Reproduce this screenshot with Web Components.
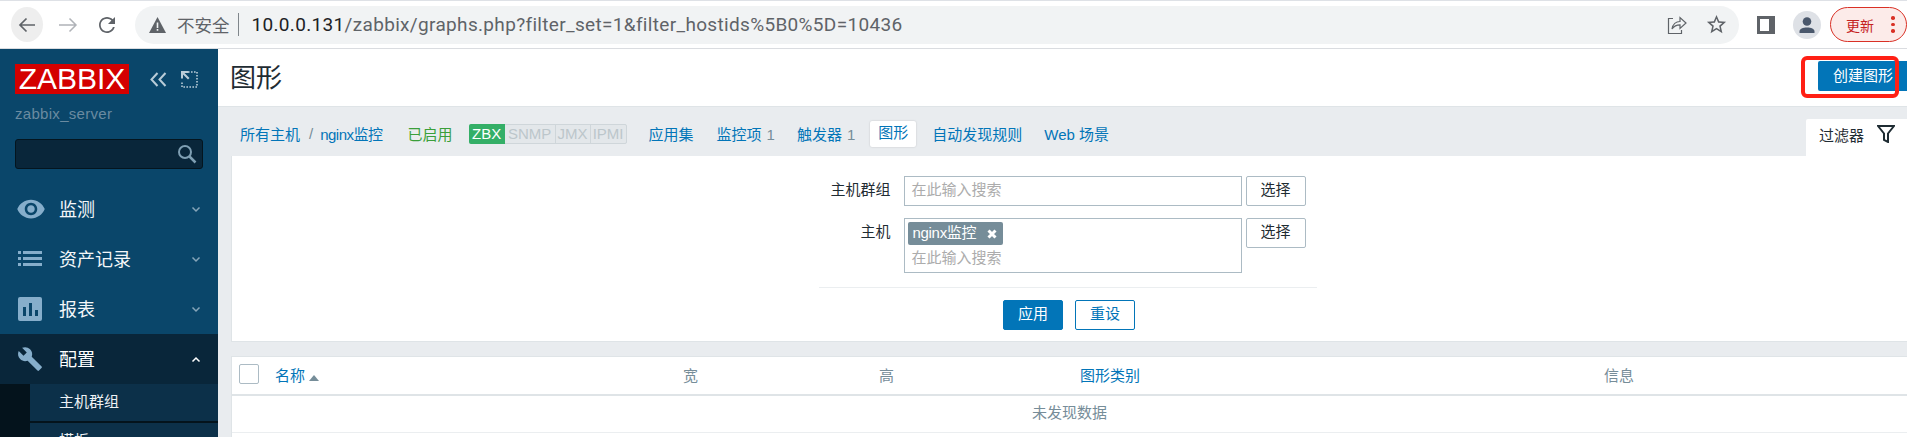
<!DOCTYPE html>
<html>
  <head>
    <meta charset="UTF-8">
    <title>Zabbix graphs</title>
    <style>
html, body { margin: 0; height: 437px; overflow: hidden; background: #fff; }
body { font: 15px "Liberation Sans", "Noto Sans CJK SC", sans-serif; color: #1f2c33; }
.app { display: grid; grid-template-columns: 218px 1fr; height: 388px; overflow: hidden; }
.content { display: flex; flex-direction: column; min-width: 0; background: #e9ecef; }
    </style>
    <script type="module">
function define(name, css, html) {
  customElements.define(name, class extends HTMLElement {
    constructor() {
      super();
      this.attachShadow({ mode: 'open' }).innerHTML = `<style>${css}</style>${html}`;
    }
  });
}

define('browser-bar', `
  :host { display: flex; align-items: center; height: 47px; border-top: 1px solid #dee1e6; border-bottom: 1px solid #dadce0;
    background: #fff; font-family: Roboto, "Noto Sans CJK SC", sans-serif; overflow: hidden; }
  .nav { width: 32px; height: 35px; border-radius: 50%; display: grid; place-items: center; margin-left: 11px; background: #eeeeee; flex: none; }
  .plain { width: 24px; height: 24px; flex: none; display: block; }
  .omni { margin-left: 16px; width: 1604px; height: 38px; border-radius: 19px; background: #f1f3f4; display: flex; align-items: center; flex: none; }
  .warn { margin-left: 14px; width: 17px; height: 16px; flex: none; }
  .sec { margin-left: 11px; font-size: 17.5px; color: #5f6368; }
  .sep { width: 1px; height: 23px; background: #80868b; margin: 0 13px 0 8px; }
  .url { font-size: 19px; color: #5f6368; white-space: nowrap; flex: 1; letter-spacing: .33px; }
  .url b { font-weight: 400; color: #202124; }
  .avatar { width: 28px; height: 28px; border-radius: 50%; background: #dee1e6; display: grid; place-items: center; flex: none; margin-left: 18px; }
  .pill { margin-left: 9px; height: 35px; border: 1px solid #d93025; border-radius: 18px; background: #fcebe9; color: #c5221f;
    font-size: 14px; display: flex; align-items: center; padding-left: 15px; box-sizing: border-box; width: 77px; flex: none; gap: 17px; }
  .dots { display: grid; gap: 3px; }
  .dots i { display: block; width: 3.5px; height: 3.5px; border-radius: 50%; background: #d93025; }
`, `
  <div class="nav"><svg width="20" height="20" viewBox="0 0 20 20" fill="none" stroke="#5f6368" stroke-width="1.700"><path d="M18 10H3M9.500 3.500L3 10l6.500 6.500"/></svg></div>
  <svg class="plain" style="margin:0 0 0 13px" viewBox="0 0 24 24" fill="none" stroke="#b0b3b8" stroke-width="1.500"><path d="M3 12h17M13.500 5.500L20 12l-6.500 6.500"/></svg>
  <svg class="plain" style="margin-left:15px" viewBox="0 0 24 24" fill="#5f6368"><path d="M17.650 6.350C16.200 4.900 14.210 4 12 4c-4.420 0-8 3.580-8 8s3.580 8 8 8c3.730 0 6.840-2.550 7.730-6h-1.800c-.820 2.500-3.200 4.300-5.930 4.300-3.450 0-6.300-2.850-6.300-6.300s2.850-6.300 6.300-6.300c1.700 0 3.300.75 4.400 1.900L13 11h7V4l-2.350 2.350z"/></svg>
  <div class="omni">
    <svg class="warn" viewBox="0 0 17 16"><path d="M8.500 0L17 16H0z" fill="#5f6368"/><path d="M7.700 5.500h1.600v5.500H7.700zM7.700 12h1.600v1.700H7.700z" fill="#f1f3f4"/></svg>
    <span class="sec">不安全</span><span class="sep"></span>
    <span class="url"><b>10.0.0.131</b>/zabbix/graphs.php?filter_set=1&amp;filter_hostids%5B0%5D=10436</span>
    <svg width="20" height="20" viewBox="0 0 20 20" fill="none" stroke="#5f6368" stroke-width="1.200" style="margin-right:17.500px;flex:none"><path d="M6 3.500H1.500v15h13V15"/><path d="M5 14c.8-4.500 4-7.500 8-7.500V2.500l6 5.500-6 5.500V9.800c-3.500 0-6 1.200-8 4.200z"/></svg>
    <svg width="23" height="23" viewBox="0 0 24 24" fill="#5f6368" style="margin-right:11.500px;flex:none"><path d="M22 9.240l-7.190-.62L12 2 9.190 8.630 2 9.240l5.460 4.730L5.820 21 12 17.270 18.180 21l-1.630-7.030L22 9.240zM12 15.400l-3.760 2.270 1-4.280-3.320-2.880 4.380-.38L12 6.100l1.710 4.040 4.380.38-3.320 2.880 1 4.280L12 15.400z"/></svg>
  </div>
  <svg width="18" height="18" viewBox="0 0 18 18" style="margin-left:18px;flex:none"><path d="M0 0h18v18H0z" fill="#5f6368"/><path d="M3 3h9v12H3z" fill="#fff"/></svg>
  <div class="avatar"><svg width="18" height="18" viewBox="0 0 18 18" fill="#4a586c"><circle cx="9" cy="5.500" r="4.300"/><path d="M1.500 17v-1.500c0-2.800 3.400-4 7.500-4s7.500 1.200 7.500 4V17z"/></svg></div>
  <div class="pill"><span>更新</span><span class="dots"><i></i><i></i><i></i></span></div>
`);

define('side-nav', `
  :host { display: flex; flex-direction: column; background: #0a466a; overflow: hidden; height: 388px; }
  .top { display: flex; align-items: center; padding: 15px 0 0 15px; height: 30px; flex: none; }
  .logo { width: 114px; height: 30px; background: #d40000; color: #fff; font: 30px/30px "Liberation Sans", sans-serif; text-align: center; flex: none; }
  .top svg { flex: none; }
  .server { margin: 11px 0 0 15px; font-size: 15px; line-height: 18px; letter-spacing: .3px; color: #6a8ba1; flex: none; }
  .search { margin: 16px 15px 0 15px; height: 30px; box-sizing: border-box; background: #09263a; border: 1px solid #04151f; border-radius: 3px; display: flex; justify-content: flex-end; align-items: center; padding-right: 5px; flex: none; }
  .menu { margin-top: 15px; flex: none; }
`, `
  <div class="top">
    <span class="logo">ZABBIX</span>
    <svg width="17" height="15" viewBox="0 0 17 15" fill="none" stroke="#b9ccd8" stroke-width="2" style="margin-left:21px"><path d="M7.500 1L1.500 7.500 7.500 14M15.500 1L9.500 7.500 15.500 14"/></svg>
    <svg width="17" height="17" viewBox="0 0 17 17" style="margin-left:14px"><path d="M7 1h9v15H1V10" fill="none" stroke="#b9ccd8" stroke-width="1.600" stroke-dasharray="1.600 1.400"/><path d="M0 0h7.500v2H3.500l5 5-1.500 1.500-5-5v4H0z" fill="#b9ccd8"/></svg>
  </div>
  <div class="server">zabbix_server</div>
  <div class="search"><svg width="20" height="20" viewBox="0 0 20 20" fill="none" stroke="#7f9fb3" stroke-width="2"><circle cx="8" cy="8" r="6"/><path d="M12.500 12.500l6 6" stroke-width="2.500"/></svg></div>
  <div class="menu"><slot></slot></div>
`);

define('nav-item', `
  :host { display: flex; align-items: center; height: 50px; color: #f4f7f9; font-size: 18px; padding-left: 16px; padding-right: 17px; box-sizing: border-box; }
  :host([open]) { background: #09263a; color: #fff; }
  :host([open]) .chev { transform: rotate(180deg); stroke: #fff; }
  .icon { width: 28px; display: grid; place-items: center; margin: -1px 15px 0 0; color: #86aecb; flex: none; }
  .label { flex: 1; padding-bottom: 3px; }
  .chev { width: 10px; height: 7px; margin-top: 1px; }
  ::slotted(svg) { display: block; }
`, `
  <span class="icon"><slot name="icon"></slot></span>
  <span class="label"><slot></slot></span>
  <svg class="chev" viewBox="0 0 10 7" fill="none" stroke="#86a5b9" stroke-width="1.500"><path d="M1.500 1.500L5 5l3.500-3.500"/></svg>
`);

define('nav-sub', `
  :host { display: block; padding-left: 30px; background: #04131c; }
`, `<slot></slot>`);

define('nav-sub-item', `
  :host { display: block; height: 37px; line-height: 36px; padding-left: 29px; margin-bottom: 2px; background: #0c3049; color: #eef2f5; font-size: 15px; }
`, `<slot></slot>`);

define('page-header', `
  :host { display: flex; align-items: center; justify-content: space-between; height: 57px; background: #fff; border-bottom: 1px solid #dfe4e7; padding-left: 13px; overflow: hidden; position: relative; flex: none; }
  h1 { margin: 0 0 0 -1px; font: 400 26px/30px "Liberation Sans", "Noto Sans CJK SC", sans-serif; color: #1f2c33; }
  .btn { width: 100px; margin-right: -11px; height: 30px; line-height: 29px; box-sizing: border-box; padding-left: 15px; background: #0275b8; color: #fff; border-radius: 2px; font-size: 15px; margin-top: -3px; }
  .mark { position: absolute; left: 1583px; top: 7px; width: 98px; height: 42px; box-sizing: border-box; border: 4px solid #ff2015; border-radius: 6px; }
`, `<h1><slot name="title"></slot></h1><span class="btn"><slot name="action"></slot></span><span class="mark"></span>`);

define('sub-nav', `
  :host { display: flex; align-items: flex-end; height: 49px; padding-left: 22px; flex: none; color: #0275b8; font-size: 15px; overflow: hidden; }
  .row { display: flex; align-items: center; height: 36px; align-self: flex-start; margin-top: 8px; white-space: nowrap; }
  .sep { color: #768d99; margin: 0 7px 0 9px; }
  .nx { letter-spacing: -.5px; }
  .green { color: #3a9f3a; margin-left: 25px; }
  .tags { display: flex; height: 20px; margin: 2px 0 0 16px; border: 1px solid #cfd6da; border-radius: 2px; box-sizing: border-box; background: #e3e7ea; color: #bcc6cb; font-size: 15px; line-height: 18px; }
  .tags span { border-left: 1px solid #cfd6da; box-sizing: border-box; text-align: center; }
  .tags .on { background: #34af67; color: #fff; width: 36px; margin: -1px 0 -1px -1px; line-height: 20px; border: 0; border-radius: 2px 0 0 2px; }
  .t { margin-left: 23px; }
  .t + .t { margin-left: 22px; }
  .t i { font-style: normal; color: #768d99; margin-left: 5px; }
  .first { margin-left: 22px; }
  .cur { margin: 2px 0 0 15px; padding: 0 8px; height: 26px; line-height: 24px; background: #fff; border-radius: 2px; box-shadow: 0 0 2px rgba(0,0,0,.18); }
  .after { margin-left: 16px; }
  .filter { margin-left: auto; width: 101px; height: 37px; background: #fff; box-sizing: border-box; padding: 0 0 6px 13px; display: flex; align-items: center; color: #1f2c33; gap: 13px; border-radius: 2px 0 0 0; flex: none; }
  .filter svg { margin-top: -1px; }
  .web { margin-left: 22px; }
`, `
  <div class="row">
    <span>所有主机</span><span class="sep">/</span><span class="nx">nginx监控</span>
    <span class="green">已启用</span>
    <span class="tags"><span class="on">ZBX</span><span style="width:50px;border-left:0">SNMP</span><span style="width:35px">JMX</span><span style="width:36px">IPMI</span></span>
    <span class="first">应用集</span>
    <span class="t">监控项<i>1</i></span>
    <span class="t">触发器<i>1</i></span>
    <span class="cur">图形</span>
    <span class="after">自动发现规则</span>
    <span class="web">Web 场景</span>
  </div>
  <div class="filter"><span>过滤器</span><svg width="18" height="18" viewBox="0 0 18 18" fill="none" stroke="#1f2c33" stroke-width="2"><path d="M1 1h16l-6 7.500V17l-4-2V8.500z"/></svg></div>
`);

define('host-filter', `
  :host { display: block; height: 186px; box-sizing: border-box; margin-left: 13px; background: #fff; border: 1px solid #dfe4e7; border-width: 0 0 1px 1px; flex: none; padding: 20px 4px 0 0; font-size: 15px; }
  .form { width: 498px; margin: 0 auto; }
  .grid { display: grid; grid-template-columns: 72px 338px 60px; column-gap: 13px; padding-bottom: 14px; border-bottom: 1px solid #ebeef0; row-gap: 12px; }
  label { text-align: right; line-height: 28px; color: #1f2c33; }
  .input { box-sizing: border-box; height: 30px; border: 1px solid #acbbc4; padding: 0 7px; line-height: 26px; color: #acacac; }
  .multi { height: 55px; padding: 3px 3px 0; }
  .multi div { padding-left: 4px; line-height: 26px; }
  .tag { display: flex; align-items: center; justify-content: space-between; width: 95px; height: 23px; box-sizing: border-box; padding: 0 6px 2px 5px; background: #768d99; color: #fff; border-radius: 2px; line-height: 21px; letter-spacing: -.3px; }
  .tag svg { margin-top: 2px; }
  .sel { box-sizing: border-box; width: 60px; height: 30px; border: 1px solid #acbbc4; border-radius: 2px; text-align: center; line-height: 26px; color: #1f2c33; margin-left: -9px; }
  .acts { display: flex; justify-content: center; gap: 12px; margin-top: 12px; padding-left: 3px; }
  .acts span { box-sizing: border-box; width: 60px; height: 30px; border: 1px solid #0275b8; border-radius: 2px; text-align: center; line-height: 26px; color: #0275b8; }
  .acts .pri { background: #0275b8; color: #fff; }
`, `
  <div class="form">
    <div class="grid">
      <label>主机群组</label><div class="input">在此输入搜索</div><div class="sel">选择</div>
      <label>主机</label>
      <div class="input multi"><span class="tag"><span>nginx监控</span><svg width="10" height="10" viewBox="0 0 10 10" stroke="#fff" stroke-width="3"><path d="M1.500 1.500l7 7M8.500 1.500l-7 7"/></svg></span><div>在此输入搜索</div></div>
      <div class="sel">选择</div>
    </div>
    <div class="acts"><span class="pri">应用</span><span>重设</span></div>
  </div>
`);

define('data-table', `
  :host { display: block; margin: 14px 0 0 13px; background: #fff; border-left: 1px solid #dfe4e7; border-top: 1px solid #dfe4e7; flex: 1; font-size: 15px; }
  .head { display: grid; grid-template-columns: 43px 408px 196px 201px 524px 1fr; height: 37px; box-sizing: content-box; align-items: center; border-bottom: 2px solid #dfe4e7; color: #768d99; }
  .head > span { margin-top: -3px; }
  .box { display: block; width: 20px; height: 20px; box-sizing: border-box; border: 1px solid #acbbc4; border-radius: 2px; margin-left: 7px; }
  .link { color: #0275b8; }
  .tri { display: inline-block; width: 0; height: 0; border: 5px solid transparent; border-top: 0; border-bottom: 6px solid #768d99; margin-left: 4px; vertical-align: 0; }
  .empty { height: 37px; line-height: 34px; border-bottom: 1px solid #ebeef0; text-align: center; color: #768d99; box-sizing: border-box; }
`, `
  <div class="head">
    <span><span class="box"></span></span>
    <span class="link">名称<i class="tri"></i></span><span>宽</span><span>高</span><span class="link">图形类别</span><span>信息</span>
  </div>
  <div class="empty">未发现数据</div>
`);
    </script>
  </head>
  <body>
    <browser-bar></browser-bar>
    <div class="app">
      <side-nav>
        <nav-item><svg slot="icon" width="30" height="30" viewBox="0 0 24 24" fill="currentColor"><path d="M12 4.500C7 4.500 2.730 7.610 1 12c1.730 4.390 6 7.500 11 7.500s9.270-3.110 11-7.500c-1.730-4.390-6-7.500-11-7.500zM12 17c-2.760 0-5-2.240-5-5s2.240-5 5-5 5 2.240 5 5-2.240 5-5 5zm0-8c-1.660 0-3 1.340-3 3s1.340 3 3 3 3-1.340 3-3-1.340-3-3-3z"/></svg>监测</nav-item>
        <nav-item><svg slot="icon" width="24" height="15" viewBox="0 0 24 15" fill="currentColor"><path d="M0 0h3v3H0zM5 0h19v3H5zM0 6h3v3H0zM5 6h19v3H5zM0 12h3v3H0zM5 12h19v3H5z"/></svg>资产记录</nav-item>
        <nav-item><svg slot="icon" width="24" height="24" viewBox="0 0 24 24"><rect width="24" height="24" rx="2" fill="currentColor"/><path d="M5 10h3v9H5zM11 6h3v13h-3zM17 13h3v6h-3z" fill="#0a466a"/></svg>报表</nav-item>
        <nav-item open><svg slot="icon" width="26" height="26" viewBox="0 0 24 24" fill="currentColor"><path d="M22.700 19l-9.100-9.100c.9-2.300.4-5-1.500-6.900-2-2-5-2.400-7.400-1.300L9 6 6 9 1.600 4.700C.4 7.100.9 10.100 2.900 12.100c1.900 1.900 4.600 2.400 6.900 1.500l9.100 9.100c.4.400 1 .4 1.400 0l2.300-2.300c.5-.4.5-1.100.1-1.400z"/></svg>配置</nav-item>
        <nav-sub>
          <nav-sub-item>主机群组</nav-sub-item>
          <nav-sub-item>模板</nav-sub-item>
        </nav-sub>
      </side-nav>
      <div class="content">
        <page-header><span slot="title">图形</span><span slot="action">创建图形</span></page-header>
        <sub-nav></sub-nav>
        <host-filter></host-filter>
        <data-table></data-table>
      </div>
    </div>
  </body>
</html>
